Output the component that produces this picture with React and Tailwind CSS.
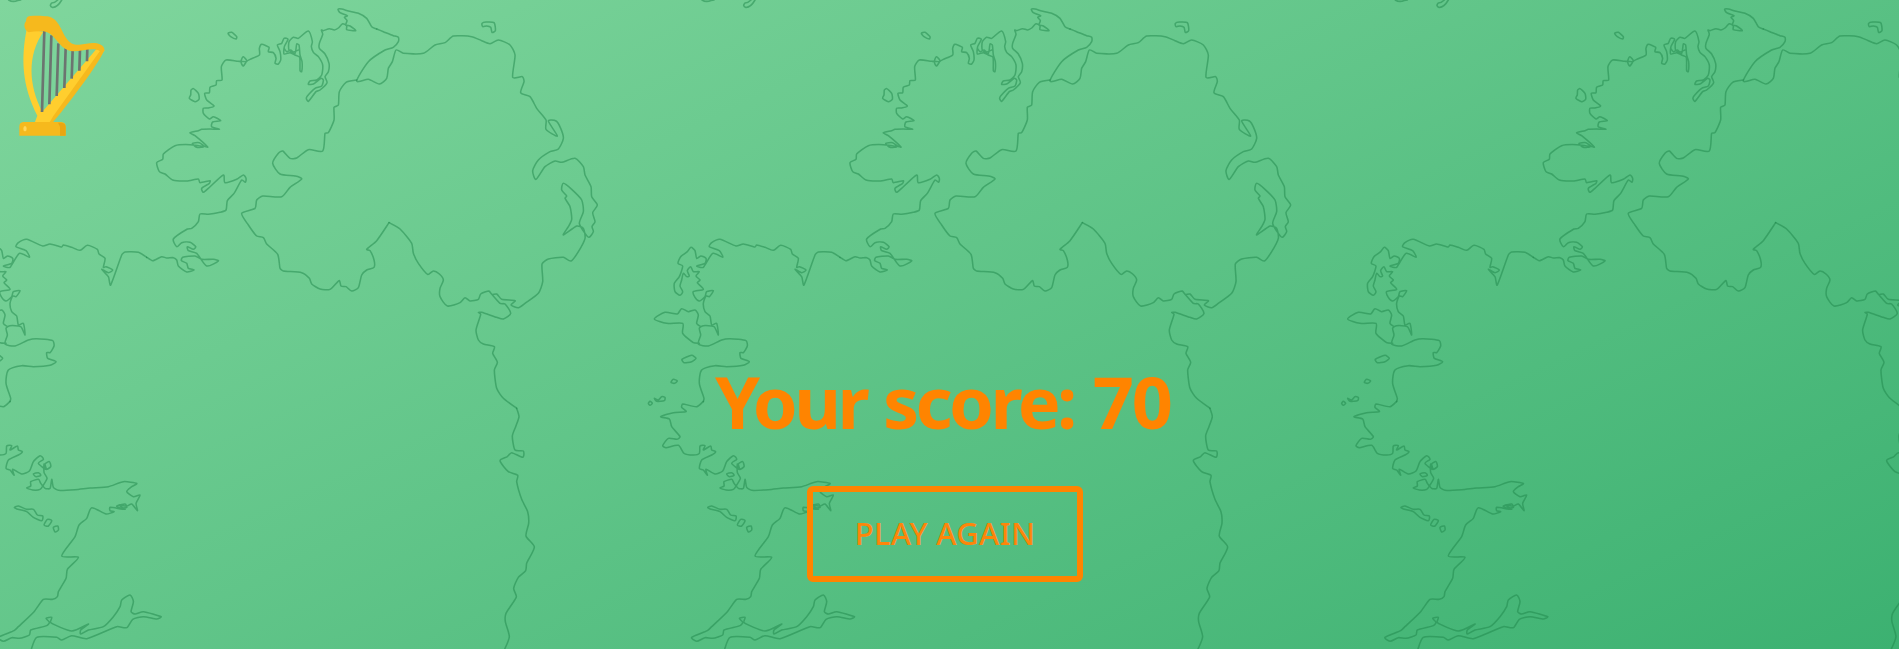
const REGIONS = [
  {
    at: 'translate(840 0) scale(0.33333)',
    open: [
      '690 87 675 80 660 55 635 40 605 33 585 27 574 28 580 38 602 47 593 52 601 62 597 75 610 78 627 92 600 89 600 78 588 71 575 84 563 90 548 86 530 92 524 90 528 103 518 130 518 145 535 162 547 190 545 215 535 230 541 248 520 270 508 275 485 304 479 296 482 288 505 265 525 258 530 240 523 235 500 252 485 253 490 243 510 240 525 225 528 195 515 170 500 157 494 140 497 125 485 93 455 115 440 112 427 125 427 150 445 160 450 132 457 135 460 165 466 185 465 215 460 212 459 172 445 165 430 158 412 162 413 140 424 118 412 115 405 130 392 135 400 155 402 180 395 192 385 190 388 175 380 158 365 155 367 142 345 133 338 145 338 165 310 178 300 184 290 198 284 190 284 180 290 170 300 184 275 184 238 180 224 200 226 240 210 242 208 255 190 262 188 278 174 280 180 300 202 318 185 324 170 325 170 340 188 357 200 350 222 362 198 366 195 380 218 388 190 387 165 388 155 392 130 398 145 407 183 441 172 438 158 428 137 430 150 442 170 440 130 434 85 437 50 462 48 478 30 488 38 515 55 522 78 540 120 543 155 537 160 548 190 542 188 550 165 565 170 577 185 565 230 525 235 548 270 538 290 525 298 535 296 547 285 540 262 580 242 602 238 630 220 637 185 643 160 642 155 665 135 685 122 687 80 717 90 740 105 728 130 727 147 740 140 748 122 740 125 752 150 760 180 798 215 783 200 778 165 778 145 768 108 772 104 782 120 790 125 805 142 810 120 816 95 798 90 780 80 773 60 774 45 770 18 782 0 772',
      '630 240 598 247 578 275 575 315 562 322 562 360 545 398 535 400 528 453 485 449 450 474 430 475 408 453 395 460 378 490 400 522 445 528 465 537 430 562 405 590 348 588 330 600 325 625 285 640 305 675 330 708 350 713 360 732 393 763 400 805 410 813 465 818 488 835 495 852 520 867 550 868 577 842 583 858 598 860 615 873 635 863 645 825 660 810 682 802 682 780 670 752 660 748 690 722 727 668',
      '412 145 420 155 432 150 440 156 455 150',
    ],
    closed: [
      '244 100 255 97 270 110 268 117 252 110',
      '133 270 140 266 155 280 157 298 145 305 128 295 132 285',
    ],
  },
  {
    at: 'translate(1050 0) scale(0.33333)',
    open: [
      '60 87 80 95 110 107 125 112 125 125 110 142 85 150 35 185 0 243 35 238 68 252 90 235 95 205 107 185 118 150 140 160 200 160 235 135 265 128 290 108 345 110 375 122 400 131 425 120 460 135 475 165 468 232 497 230 502 245 492 278 520 290 540 325 568 360 568 388 602 408 575 363 598 363 612 385 620 415 605 447 580 455 545 480 528 512 538 538 565 500 595 483 615 487 655 475 680 500 685 525 703 560 705 590 722 615 708 638 715 665 706 680 710 695 697 712 685 700 668 670 680 635 675 600 645 568 620 550 615 570 630 588 625 595 640 620 645 658 635 680 620 705 660 678 680 685 685 715 665 755 643 783 620 772 575 777 556 792 558 845 545 880 505 910 485 923 463 915 475 902 435 898 420 882 405 883 397 873 372 882 365 898 340 903 325 893 310 908 272 918 250 890 250 865 260 840 248 822 230 813 213 823 185 790 170 760 165 730 130 687 97 668',
      '397 873 430 910 445 912 462 940 440 957 420 952 375 937 365 937 372 943 358 990 365 1020 380 1032 413 1040 408 1060 422 1087 413 1110 420 1165 440 1195 480 1225',
    ],
    closed: ['376 70 388 66 412 68 416 92 406 97 402 82 390 78 378 80'],
  },
  {
    at: 'translate(1093.3 400) scale(0.33333)',
    open: [
      '350 25 357 50 347 80 337 108 345 150 370 153 368 172 335 158 322 170 300 182 325 215 353 226 350 245 365 298 383 335 386 370 378 408 403 441 380 490 377 512 355 532 341 565 349 591 318 640 316 665 328 710 313 750',
    ],
    closed: [],
  },
  {
    at: 'translate(640 180) scale(0.33333)',
    open: [
      '600 232 575 217 535 216 525 225 492 315 485 290 465 268 485 278 498 270 478 260 470 262 475 235 457 222 452 208 422 196 400 211 375 202 350 195 345 201 310 192 288 198 240 178 215 188 208 200 238 212 248 232 218 220 190 262 170 258 195 250 198 235 183 228 170 235 165 212 153 202 142 215 122 230 114 250 128 258 118 290 103 310 105 335 120 346 128 335 120 318 125 300 130 280 140 290 148 288 142 272 152 260 160 275 178 275 168 288 180 300 172 308 190 328 160 335 165 352 178 363 195 350 200 335 220 332 208 350 198 348 190 370 195 395 210 408 215 435 230 430 235 465 222 440 190 437 178 445 182 465 175 492 205 498 245 480 270 476 318 482 322 498 310 518 300 518 303 535 328 545 310 556 260 560 225 557 185 570 178 610 192 655 190 665',
      '178 490 160 488 128 460 128 430 80 430 43 417 75 397 112 402 125 386 145 395 165 390 175 405 170 430 182 440',
    ],
    closed: [
      '126 538 155 526 168 535 155 545 132 548',
      '93 607 100 598 112 603 103 610',
      '25 670 30 664 37 670 30 676',
      '43 655 55 660 65 650 75 652 73 662 50 664',
    ],
  },
  {
    at: 'translate(636.7 400) scale(0.33333)',
    open: [
      '200 4 180 20 138 12 135 22 148 35 110 38 72 50 98 57 105 80 130 110 120 118 95 115 78 137 88 143 125 136 142 160 170 165 188 160 190 138 205 137 200 150 222 138 225 150 237 155 225 165 195 180 188 205 200 210 212 226 208 208 235 222 258 213 270 185 290 167 300 178 285 190 308 208 305 192 318 185 322 200 308 208 302 192 302 218 311 235 300 255 290 268 268 270 250 264 262 258 262 245 285 238 292 250 305 265 320 265 325 238 330 262 345 271 395 269 440 264 495 260 540 245 580 250 565 260 550 275 570 290 590 285 578 310 582 332 565 312 550 318 525 315 545 328 500 322 500 332 512 335 488 342 445 323 430 355 407 375 395 410 355 468 405 472 372 508 368 535 345 575 342 590 328 598 300 598 272 635 225 680 212 692 165 712 180 724 205 713 228 715 258 705 262 690 310 677 318 667 308 655 325 652 322 668 385 693 435 672 412 690 412 702 435 690 480 680 510 650 530 620 535 600 560 585 570 605 563 635 575 642 600 635 653 650 640 657 600 650 568 658 550 683 520 680 430 716 385 707 355 720 340 712 280 712 263 750',
    ],
    closed: [
      '270 222 285 218 292 226 278 230',
      '520 318 545 312 550 322 530 324',
      '213 322 225 318 250 328 270 328 282 345 298 348 295 362 270 352 250 335 220 327',
      '302 375 312 358 325 362 315 378',
      '330 382 343 378 345 390 335 396',
    ],
  },
];

// Turns a list of points into a smooth curve that passes through each of them.
function curve(text, closed) {
  const n = text.split(' ').map(Number);
  const p = [];
  for (let i = 0; i < n.length; i += 2) p.push([n[i], n[i + 1]]);
  const count = p.length;
  const pick = (i) => (closed ? p[(i + count) % count] : p[Math.max(0, Math.min(count - 1, i))]);
  let d = `M${p[0][0]} ${p[0][1]}`;
  const last = closed ? count : count - 1;
  for (let i = 0; i < last; i += 1) {
    const [a, b, c, e] = [pick(i - 1), pick(i), pick(i + 1), pick(i + 2)];
    const span = Math.hypot(c[0] - b[0], c[1] - b[1]);
    const bend = (u, v) => {
      const len = Math.hypot(v[0] - u[0], v[1] - u[1]) || 1;
      const k = Math.min(1 / 8, (span * 0.22) / len);
      return [(v[0] - u[0]) * k, (v[1] - u[1]) * k];
    };
    const s = bend(a, c);
    const t = bend(b, e);
    d += `C${b[0] + s[0]} ${b[1] + s[1]} ${c[0] - t[0]} ${c[1] - t[1]} ${c[0]} ${c[1]}`;
  }
  return closed ? `${d}Z` : d;
}

const TILE = REGIONS.map((r) => ({
  at: r.at,
  d: [...r.open.map((t) => curve(t, false)), ...r.closed.map((t) => curve(t, true))].join(''),
}));

function MapTile() {
  return (
    <g fill="none" stroke="#1d8549" strokeOpacity="0.5" strokeWidth="4.6" strokeLinejoin="round" strokeLinecap="round">
      {TILE.map((r) => (
        <path key={r.at} transform={r.at} d={r.d} />
      ))}
      <path d="M702 0 Q706 2.5 711 0.5 L714 0" strokeWidth="1.6" />
      <path d="M745 3 Q748 3 751 0 M745 3 Q742 6 746 7.5 Q751 7 755 0" strokeWidth="1.6" />
    </g>
  );
}

function Harp() {
  return (
    <svg viewBox="0 0 390 450" className="h-[150px] w-[130px]">
      <path d="M80 88 C63 175 65 255 112 347 L104 368 H158 L165 352 L314 150 L292 144 L127 335 C85 255 82 165 130 95 Z" fill="#ffce2e" />
      <path d="M302 150 L314 149 C290 200 220 290 172 351 L157 368 H148 L160 348 Z" fill="#f6b91d" />
      <path
        d="M133 92 L126 336 M154 106 L148 313 M175 130 L170 288 M197 145 L193 264 M218 150 L215 236 M240 148 L238 212 M262 142 L261 184"
        stroke="#6c7470"
        strokeWidth="8"
      />
      <path d="M90 48 C110 46 130 47 142 49 C178 56 182 92 200 116 C210 130 222 135 238 134 C256 133 272 127 290 130 C306 133 316 143 312 152 L300 154 C282 140 250 154 220 154 C176 153 168 97 130 94 C114 93 100 94 86 97 C72 90 70 72 78 64 C78 54 82 49 90 48 Z" fill="#f6b91d" />
      <path d="M70 366 H184 Q197 367 197 380 V407 H58 V380 Q58 367 70 366 Z" fill="#f6b91d" />
      <path d="M174 368 H184 Q197 369 197 380 V407 H180 V380 Z" fill="#eaa612" />
      <ellipse cx="75" cy="386" rx="5" ry="8" fill="#ffd75a" />
    </svg>
  );
}

export default function App() {
  return (
    <div className="relative h-[649px] w-full overflow-hidden bg-[linear-gradient(155deg,#80d69d,#3cb171)] font-['Noto_Sans',sans-serif]">
      <svg className="absolute inset-0 h-full w-full" viewBox="0 0 1899 649">
        <g transform="translate(-693.3 0)"><MapTile /></g>
        <MapTile />
        <g transform="translate(693.3 0)"><MapTile /></g>
      </svg>
      <div className="relative flex h-full flex-col">
        <header className="h-[150px]">
          <Harp />
        </header>
        <main className="mt-[201px] flex w-full flex-col items-center pr-[9px]">
          <h1 className="mr-[4px] flex h-[100px] gap-[17px] text-[72px] leading-[100px] font-bold tracking-[-3.6px] whitespace-nowrap text-[#ff8400]">
            <span>Your</span>
            <span>score:</span>
            <span className="ml-[2px] tracking-[-2px]">70</span>
          </h1>
          <button className="mt-[35px] h-[96px] w-[276px] rounded-[6px] border-[6px] border-[#ff8400] pb-[2px] text-[31px] leading-[40px] font-medium tracking-[0.3px] text-[#fd860a]">
            PLAY AGAIN
          </button>
        </main>
      </div>
    </div>
  );
}
